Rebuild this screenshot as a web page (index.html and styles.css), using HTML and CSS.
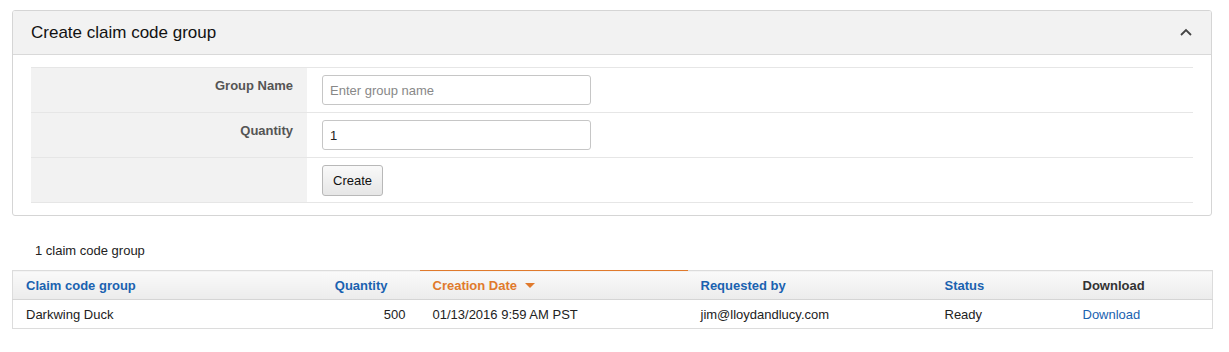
FILE: index.html
```html
<!DOCTYPE html>
<html lang="en">
  <head>
    <link rel="stylesheet" href="styles.css">
    <title>Claim codes</title>
  </head>
  <body>
    <div class="page">
      <div class="panel">
        <div class="panel-head">
          <h2 class="panel-title">Create claim code group</h2>
          <svg class="chevron" width="14" height="10" viewBox="0 0 14 10">
            <path d="M2 8 L7 3 L12 8" fill="none" stroke="#444" stroke-width="1.8" />
          </svg>
        </div>
        <div class="panel-body">
          <div class="form">
            <div class="form-row">
              <label class="form-label">Group Name</label>
              <div class="form-field">
                <input type="text" class="input" placeholder="Enter group name" />
              </div>
            </div>
            <div class="form-row">
              <label class="form-label">Quantity</label>
              <div class="form-field">
                <input type="text" class="input" value="1" />
              </div>
            </div>
            <div class="form-row">
              <div class="form-label"></div>
              <div class="form-field">
                <button class="btn">Create</button>
              </div>
            </div>
          </div>
        </div>
      </div>

      <div class="count">1 claim code group</div>

      <table class="grid">
        <colgroup>
          <col style="width: 308px" />
          <col style="width: 99px" />
          <col style="width: 268px" />
          <col style="width: 244px" />
          <col style="width: 138px" />
          <col style="width: 143px" />
        </colgroup>
        <thead>
          <tr>
            <th>Claim code group</th>
            <th class="num"><span class="num-head">Quantity</span></th>
            <th class="sorted">Creation Date <span class="caret"></span></th>
            <th>Requested by</th>
            <th>Status</th>
            <th class="plain">Download</th>
          </tr>
        </thead>
        <tbody>
          <tr>
            <td>Darkwing Duck</td>
            <td class="num">500</td>
            <td>01/13/2016 9:59 AM PST</td>
            <td>jim@lloydandlucy.com</td>
            <td>Ready</td>
            <td><a href="#" class="link">Download</a></td>
          </tr>
        </tbody>
      </table>
    </div>
  </body>
</html>
```

FILE: styles.css
```css
body {
  margin: 0;
  font-family: "Liberation Sans", Arial, sans-serif;
  font-size: 13px;
  color: #333;
  background: #fff;
}
.page {
  padding: 10px 17px 0 12px;
}
.panel {
  border: 1px solid #d5d5d5;
  border-radius: 3px;
  overflow: hidden;
}
.panel-head {
  display: flex;
  align-items: center;
  justify-content: space-between;
  height: 43px;
  padding: 0 18px 0 18px;
  background: #f2f2f2;
  border-bottom: 1px solid #d9d9d9;
}
.panel-title {
  margin: 0;
  font-size: 17px;
  font-weight: normal;
  color: #111;
}
.chevron {
  display: block;
  margin-top: -2px;
}
.panel-body {
  padding: 12px 18px 12px 18px;
}
.form {
  border-top: 1px solid #e6e6e6;
}
.form-row {
  display: flex;
  height: 44px;
  border-bottom: 1px solid #e6e6e6;
}
.form-label {
  width: 276px;
  box-sizing: border-box;
  padding: 10px 14px 0 0;
  background: #f2f2f2;
  text-align: right;
  font-weight: bold;
  color: #555;
}
.form-field {
  padding: 7px 0 0 15px;
}
.input {
  box-sizing: border-box;
  width: 269px;
  height: 30px;
  padding: 0 7px;
  border: 1px solid #c6c6c6;
  border-radius: 3px;
  font-family: inherit;
  font-size: 13px;
  color: #222;
}
.input::placeholder {
  color: #888;
}
.btn {
  box-sizing: border-box;
  height: 31px;
  padding: 0 10px;
  border: 1px solid #b8b8b8;
  border-radius: 3px;
  background: linear-gradient(#f9f9f9, #e6e6e6);
  font-family: inherit;
  font-size: 13px;
  color: #111;
}
.count {
  padding: 27px 0 0 23px;
  height: 27px;
  color: #222;
}
.grid {
  width: 1200px;
  table-layout: fixed;
  border-collapse: collapse;
  border: 1px solid #dcdcdc;
}
.grid th {
  height: 27px;
  padding: 1px 13px 0 13px;
  text-align: left;
  font-weight: bold;
  color: #1a62b0;
  background: linear-gradient(#fafafa, #ececec);
  border-bottom: 1px solid #d5d5d5;
}
.grid th.sorted {
  color: #e07a2c;
  border-top: 1px solid #e07a2c;
}
.grid th.plain {
  color: #333;
}
.caret {
  display: inline-block;
  margin-left: 4px;
  border-left: 5px solid transparent;
  border-right: 5px solid transparent;
  border-top: 5px solid #e07a2c;
  vertical-align: 2px;
}
.num-head {
  padding-right: 18px;
}
.grid td {
  height: 28px;
  padding: 0 13px 0 13px;
  color: #222;
}
.grid .num {
  text-align: right;
  padding-right: 14px;
}
.link {
  color: #1a62b0;
  text-decoration: none;
}
```
